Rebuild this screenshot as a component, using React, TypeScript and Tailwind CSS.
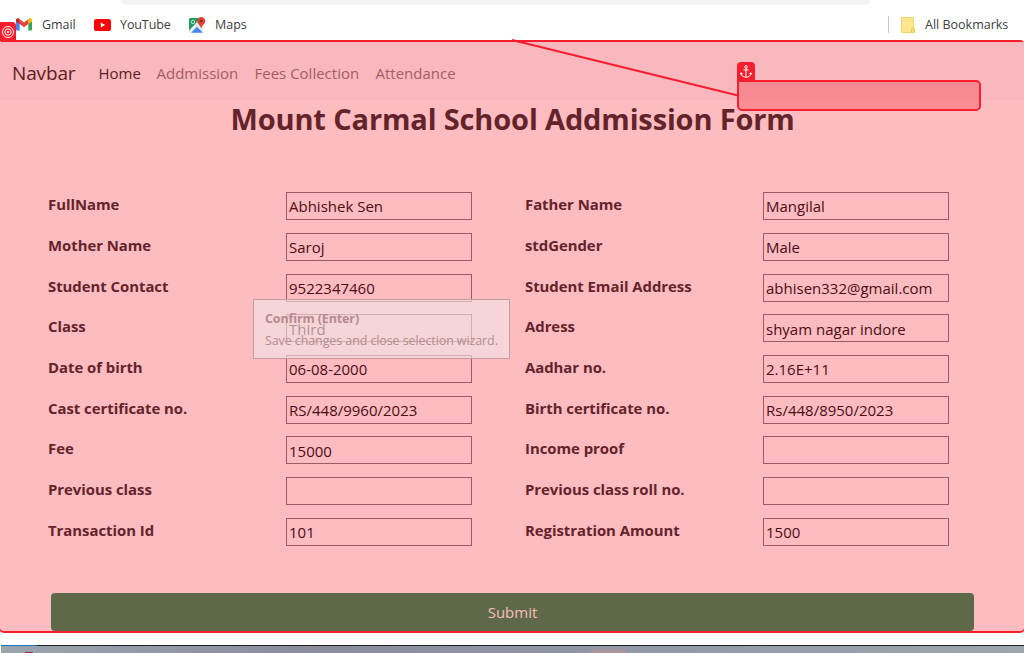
import React from "react";

type Field = { label: string; value: string };

const fields: Field[] = [
  { label: "FullName", value: "Abhishek Sen" },
  { label: "Father Name", value: "Mangilal" },
  { label: "Mother Name", value: "Saroj" },
  { label: "stdGender", value: "Male" },
  { label: "Student Contact", value: "9522347460" },
  { label: "Student Email Address", value: "abhisen332@gmail.com" },
  { label: "Class", value: "Third" },
  { label: "Adress", value: "shyam nagar indore" },
  { label: "Date of birth", value: "06-08-2000" },
  { label: "Aadhar no.", value: "2.16E+11" },
  { label: "Cast certificate no.", value: "RS/448/9960/2023" },
  { label: "Birth certificate no.", value: "Rs/448/8950/2023" },
  { label: "Fee", value: "15000" },
  { label: "Income proof", value: "" },
  { label: "Previous class", value: "" },
  { label: "Previous class roll no.", value: "" },
  { label: "Transaction Id", value: "101" },
  { label: "Registration Amount", value: "1500" },
];

function GmailIcon() {
  return (
    <svg className="h-[13px] w-4" viewBox="0 0 16 13">
      <path d="M0 2v9.5Q0 12.5 1 12.5h2.7V5z" fill="#4285f4" />
      <path d="M12.3 5v7.5H15q1 0 1-1V2z" fill="#34a853" />
      <path d="M12.3 1.5v4.6L16 3.4V2c0-1.8-1.9-2.5-3.1-1.5z" fill="#fbbc04" />
      <path d="M3.7 6.1V1.2L8 4.4l4.3-3.2v4.9L8 9.3z" fill="#ea4335" />
      <path d="M0 2v1.4l3.7 2.7V1.2L3 .6C1.800-.3 0 .5 0 2z" fill="#c5221f" />
    </svg>
  );
}

function YouTubeIcon() {
  return (
    <svg className="h-3 w-[17px]" viewBox="0 0 17 12">
      <rect width="17" height="12" rx="2.6" fill="#f00" />
      <path d="M6.800 3.400v5.200L11.200 6z" fill="#fff" />
    </svg>
  );
}

function MapsIcon() {
  return (
    <svg className="h-4 w-4 overflow-visible" viewBox="0 0 16 16">
      <path d="M1 1h10.500L1.500 12.500 0 14V2z" fill="#1e9e5a" />
      <path d="M11.500 2l2.500 3v10.500l-6-6-6 6H.500V13z" fill="#e9ecef" />
      <path d="M2 15.800L8 9.800l6 6z" fill="#4285f4" />
      <circle cx="4" cy="5" r="1.700" fill="none" stroke="#b9e3c9" strokeWidth="1" />
      <path d="M12.200 0a4 4 0 0 0-4.100 4c0 3 3.400 3.800 4.100 8 .7-4.200 4.100-5 4.100-8a4 4 0 0 0-4.100-4z" fill="#db4437" />
      <circle cx="12.200" cy="4" r="1.300" fill="#8c2a22" />
    </svg>
  );
}

function BookmarkBar() {
  return (
    <header className="h-10 bg-white text-[12.5px] text-[#3c4043]">
      <div className="ml-[121px] h-[5px] w-[749px] rounded-b-[14px] bg-[#f1f3f4]" />
      <div className="flex h-[39px] items-center pr-4 pl-4">
        <GmailIcon />
        <span className="mt-px ml-[10px] w-[52px] tracking-[-0.05px] whitespace-nowrap">Gmail</span>
        <YouTubeIcon />
        <span className="mt-px ml-[9px] w-[69px] tracking-[-0.1px] whitespace-nowrap">YouTube</span>
        <MapsIcon />
        <span className="mt-px ml-[10px]">Maps</span>
        <div className="ml-auto h-[17px] w-px bg-[#c7c9cc]" />
        <svg className="ml-3 h-4 w-[14px]" viewBox="0 0 14 16">
          <path d="M.5.5h12v11l1 1v3H.5z" fill="#fee691" stroke="#f0d465" />
          <path d="M10.500 15.500v-3q0-1.500 1.500-1.500t1.500 1.500v1.500q0 1.500-3 1.500z" fill="#fbe07b" stroke="#e8c94f" />
        </svg>
        <span className="mt-px ml-[10px] w-[83px] whitespace-nowrap">All Bookmarks</span>
      </div>
    </header>
  );
}

function NavBar() {
  return (
    <nav className="flex h-[58px] items-center bg-[#f8b8bd] pt-[5px] pl-3 text-[15px] whitespace-nowrap text-[#a75c64]">
      <span className="w-[86.500px] text-[19px] tracking-[-0.15px] text-[#5f1b24]">Navbar</span>
      <span className="w-[58px] text-[#5f1b24]">Home</span>
      <span className="w-[98px]">Addmission</span>
      <span className="w-[121px]">Fees Collection</span>
      <span>Attendance</span>
    </nav>
  );
}

function AnchorBox() {
  return (
    <div className="absolute top-[62px] left-[737px] w-[244px]">
      <div className="flex h-[18px] w-[18px] items-center justify-center rounded-t-[4px] bg-[#f91d2d]">
        <svg className="h-[13px] w-3" viewBox="0 0 12 13" fill="none" stroke="#fff" strokeWidth="1">
          <circle cx="6" cy="1.900" r="1.300" />
          <path d="M6 3.200v9M3.500 5h5M1 8c.3 2.700 2 4.200 5 4.200s4.700-1.500 5-4.200M.5 9.300L1 7.800l1.600.9M11.500 9.300L11 7.800l-1.600.9" />
        </svg>
      </div>
      <div className="h-[31px] rounded-[5px] rounded-tl-none border-2 border-[#f91d2d] bg-[#f2202e]/30 bg-clip-padding" />
    </div>
  );
}

function ConfirmTip() {
  return (
    <div className="absolute top-[299px] left-[253px] h-[60px] w-[257px] border border-[#c79ca1] bg-[#f1e6e9]/60 pt-2 pl-[11px] text-[12.5px] leading-[22px] whitespace-nowrap text-[#b58a8f]">
      <div className="font-bold tracking-[-0.13px]">Confirm (Enter)</div>
      <div className="tracking-[-0.1px]">Save changes and close selection wizard.</div>
    </div>
  );
}

export default function App() {
  return (
    <div className="relative h-[653px] w-[1024px] overflow-hidden bg-white font-['Open_Sans','Noto_Sans',sans-serif]">
      <BookmarkBar />
      <main className="-mx-px h-[593px] rounded-[5px] border-x border-y-2 border-[#f91d2d] bg-[#fdbcc0]">
        <NavBar />
        <h1 className="mt-[-2px] ml-[230.5px] h-[42px] text-[29px] leading-[42px] font-bold tracking-[-0.14px] whitespace-nowrap text-[#64232b]">
          Mount Carmal School Addmission Form
        </h1>
        <div className="mt-[52.2px] grid auto-rows-[40.7px] grid-cols-[238px_239px_238px_186px] pl-[48px]">
          {fields.map((f) => (
            <React.Fragment key={f.label}>
              <label className="text-[14.9px] leading-[25px] font-bold tracking-[-0.03px] whitespace-nowrap text-[#64232b]">{f.label}</label>
              <div className="flex h-7 w-[186px] items-center border border-[#a15a63] pt-px pl-[2px] text-[15px] whitespace-nowrap text-[#4e0b16]">
                {f.value}
              </div>
            </React.Fragment>
          ))}
        </div>
        <button className="mt-[34.5px] ml-[51px] block h-[38px] w-[923px] rounded-[4px] bg-[#5d6949] text-[15px] text-[#fbbdbb]">
          Submit
        </button>
      </main>
      <footer className="ml-px pt-3">
        <div className="flex h-px bg-[#202024]">
          <div className="h-px w-9 bg-[#1976bc]" />
        </div>
        <div className="flex h-[7px] items-end bg-linear-to-r from-[#9ba5ac] via-[#8b8ca0] via-30% to-[#9ba7ad]">
          <div className="ml-6 h-px w-2 rounded-t bg-[#8b2d34]" />
          <div className="ml-[558px] h-1 w-9 rounded-t-[4px] bg-[#a9959c]" />
        </div>
      </footer>
      <svg className="absolute top-0 left-0 h-[120px] w-[740px]" viewBox="0 0 740 120">
        <path d="M512 40L738 95.500" stroke="#f91d2d" strokeWidth="2" />
      </svg>
      <AnchorBox />
      <div className="absolute top-[22px] left-0 flex h-[19px] w-4 items-center justify-center rounded-tr-[4px] bg-[#f91d2d]">
        <svg className="h-[14px] w-[14px]" viewBox="0 0 14 14" fill="none" stroke="#fff">
          <circle cx="7" cy="7" r="5.500" />
          <circle cx="7" cy="7" r="3.100" />
          <circle cx="7" cy="7" r="1" fill="#fff" stroke="none" />
        </svg>
      </div>
      <ConfirmTip />
    </div>
  );
}
